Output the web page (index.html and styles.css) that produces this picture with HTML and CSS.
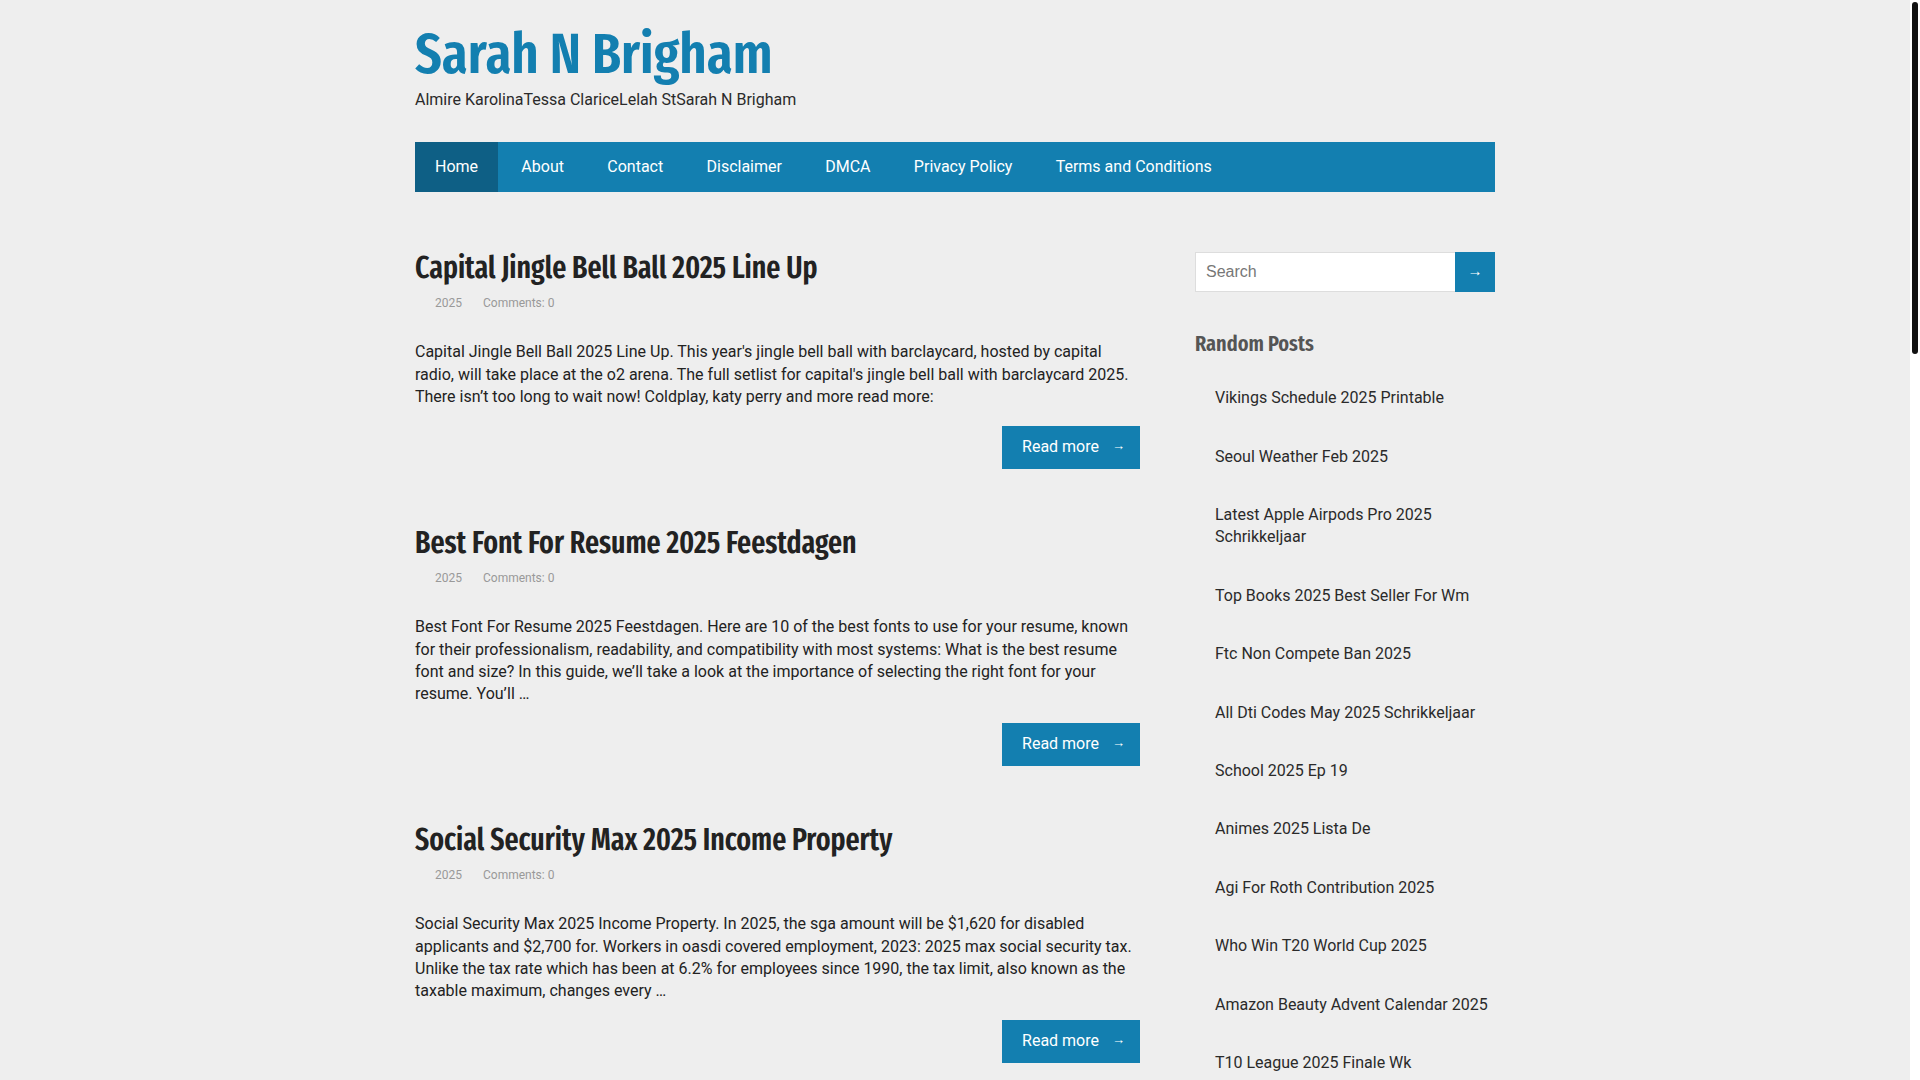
FILE: index.html
```html
<!DOCTYPE html>
<html lang="en">
<head>
<meta charset="utf-8">
<title>Sarah N Brigham</title>
<link rel="stylesheet" href="styles.css">
</head>
<body>
<div class="container">
  <header class="site-header">
    <div class="site-title"><a href="#">Sarah N Brigham</a></div>
    <div class="tagline">Almire KarolinaTessa ClariceLelah StSarah N Brigham</div>
    <nav class="main-nav">
      <ul>
        <li class="current"><a href="#">Home</a></li>
        <li><a href="#">About</a></li>
        <li><a href="#">Contact</a></li>
        <li><a href="#">Disclaimer</a></li>
        <li><a href="#">DMCA</a></li>
        <li><a href="#">Privacy Policy</a></li>
        <li><a href="#">Terms and Conditions</a></li>
      </ul>
    </nav>
  </header>

  <div class="site-main">
    <main class="content">
      <article class="post">
        <h2 class="post-title"><a href="#">Capital Jingle Bell Ball 2025 Line Up</a></h2>
        <div class="post-meta"><span class="date">2025</span><span class="comments">Comments: 0</span></div>
        <p class="excerpt">Capital Jingle Bell Ball 2025 Line Up. This year's jingle bell ball with barclaycard, hosted by capital radio, will take place at the o2 arena. The full setlist for capital's jingle bell ball with barclaycard 2025. There isn’t too long to wait now! Coldplay, katy perry and more read more:</p>
        <div class="more-row"><a class="read-more" href="#">Read more<span class="arrow">→</span></a></div>
      </article>

      <article class="post">
        <h2 class="post-title"><a href="#">Best Font For Resume 2025 Feestdagen</a></h2>
        <div class="post-meta"><span class="date">2025</span><span class="comments">Comments: 0</span></div>
        <p class="excerpt">Best Font For Resume 2025 Feestdagen. Here are 10 of the best fonts to use for your resume, known for their professionalism, readability, and compatibility with most systems: What is the best resume font and size? In this guide, we’ll take a look at the importance of selecting the right font for your resume. You’ll …</p>
        <div class="more-row"><a class="read-more" href="#">Read more<span class="arrow">→</span></a></div>
      </article>

      <article class="post">
        <h2 class="post-title"><a href="#">Social Security Max 2025 Income Property</a></h2>
        <div class="post-meta"><span class="date">2025</span><span class="comments">Comments: 0</span></div>
        <p class="excerpt">Social Security Max 2025 Income Property. In 2025, the sga amount will be $1,620 for disabled applicants and $2,700 for. Workers in oasdi covered employment, 2023: 2025 max social security tax. Unlike the tax rate which has been at 6.2% for employees since 1990, the tax limit, also known as the taxable maximum, changes every …</p>
        <div class="more-row"><a class="read-more" href="#">Read more<span class="arrow">→</span></a></div>
      </article>

      <article class="post">
        <h2 class="post-title"><a href="#">Vikings Schedule 2025 Printable</a></h2>
        <div class="post-meta"><span class="date">2025</span><span class="comments">Comments: 0</span></div>
        <p class="excerpt">Vikings Schedule 2025 Printable. The minnesota vikings have released their full schedule for the upcoming season, including preseason games, home and away matchups and the dates you need to know. Print it out and keep it handy so you never miss a game …</p>
        <div class="more-row"><a class="read-more" href="#">Read more<span class="arrow">→</span></a></div>
      </article>

      <article class="post">
        <h2 class="post-title"><a href="#">Seoul Weather Feb 2025</a></h2>
        <div class="post-meta"><span class="date">2025</span><span class="comments">Comments: 0</span></div>
        <p class="excerpt">Seoul Weather Feb 2025. February in seoul is still cold, with average highs around 5°c and lows below freezing. Expect dry days with occasional snow, so pack warm layers, gloves and a good coat if you are planning to travel during this month …</p>
        <div class="more-row"><a class="read-more" href="#">Read more<span class="arrow">→</span></a></div>
      </article>

      <article class="post">
        <h2 class="post-title"><a href="#">Top Books 2025 Best Seller For Wm</a></h2>
        <div class="post-meta"><span class="date">2025</span><span class="comments">Comments: 0</span></div>
        <p class="excerpt">Top Books 2025 Best Seller For Wm. Discover the most popular titles of the year, from gripping thrillers to heartfelt memoirs. These are the books readers could not put down, ranked by sales and reviews from around the world …</p>
        <div class="more-row"><a class="read-more" href="#">Read more<span class="arrow">→</span></a></div>
      </article>

      <article class="post">
        <h2 class="post-title"><a href="#">Ftc Non Compete Ban 2025</a></h2>
        <div class="post-meta"><span class="date">2025</span><span class="comments">Comments: 0</span></div>
        <p class="excerpt">Ftc Non Compete Ban 2025. The federal trade commission issued a final rule to promote competition by banning noncompetes nationwide, protecting the fundamental freedom of workers to change jobs, increasing innovation and fostering new business formation …</p>
        <div class="more-row"><a class="read-more" href="#">Read more<span class="arrow">→</span></a></div>
      </article>

      <article class="post">
        <h2 class="post-title"><a href="#">School 2025 Ep 19</a></h2>
        <div class="post-meta"><span class="date">2025</span><span class="comments">Comments: 0</span></div>
        <p class="excerpt">School 2025 Ep 19. The students face their biggest challenge yet as exam season approaches, friendships are tested and secrets come to light. Find out what happens next in this dramatic episode of the popular series …</p>
        <div class="more-row"><a class="read-more" href="#">Read more<span class="arrow">→</span></a></div>
      </article>

      <article class="post">
        <h2 class="post-title"><a href="#">Animes 2025 Lista De</a></h2>
        <div class="post-meta"><span class="date">2025</span><span class="comments">Comments: 0</span></div>
        <p class="excerpt">Animes 2025 Lista De. Confira a lista completa dos animes que estreiam nesta temporada, com sinopses, estúdios e datas de lançamento para você não perder nenhuma novidade do ano …</p>
        <div class="more-row"><a class="read-more" href="#">Read more<span class="arrow">→</span></a></div>
      </article>
    </main>

    <aside class="sidebar">
      <form class="search-form" onsubmit="return false">
        <input class="search-field" type="search" placeholder="Search">
        <button class="search-submit" type="submit"><span class="search-arrow">→</span></button>
      </form>

      <section class="widget">
        <h3 class="widget-title">Random Posts</h3>
        <ul class="random-list">
          <li><a href="#">Vikings Schedule 2025 Printable</a></li>
          <li><a href="#">Seoul Weather Feb 2025</a></li>
          <li><a href="#">Latest Apple Airpods Pro 2025 Schrikkeljaar</a></li>
          <li><a href="#">Top Books 2025 Best Seller For Wm</a></li>
          <li><a href="#">Ftc Non Compete Ban 2025</a></li>
          <li><a href="#">All Dti Codes May 2025 Schrikkeljaar</a></li>
          <li><a href="#">School 2025 Ep 19</a></li>
          <li><a href="#">Animes 2025 Lista De</a></li>
          <li><a href="#">Agi For Roth Contribution 2025</a></li>
          <li><a href="#">Who Win T20 World Cup 2025</a></li>
          <li><a href="#">Amazon Beauty Advent Calendar 2025</a></li>
          <li><a href="#">T10 League 2025 Finale Wk</a></li>
          <li><a href="#">Capital Jingle Bell Ball 2025 Line Up</a></li>
          <li><a href="#">Best Font For Resume 2025 Feestdagen</a></li>
          <li><a href="#">Social Security Max 2025 Income Property</a></li>
        </ul>
      </section>
    </aside>
  </div>

  <footer class="site-footer">Copyright © 2025 Sarah N Brigham</footer>
</div>
<div class="fake-scrollbar"><div class="fake-thumb"></div></div>
</body>
</html>
```
FILE: styles.css
```css
html {
  background: #eeeeee;
}
body {
  margin: 0;
  padding-right: 10px;
  background: #eeeeee;
  color: #222222;
  font-family: Roboto, "Liberation Sans", Arial, sans-serif;
  font-size: 16px;
  line-height: 1.4;
}
a {
  text-decoration: none;
  color: inherit;
}
.container {
  width: 1080px;
  margin: 0 auto;
}

/* fake scrollbar drawn over the right edge */
.fake-scrollbar {
  position: fixed;
  top: 0;
  right: 0;
  width: 10px;
  height: 100vh;
  background: #ffffff;
}
.fake-thumb {
  position: absolute;
  top: 2px;
  left: 2px;
  width: 6px;
  height: 352px;
  border-radius: 3px;
  background: #111111;
}

/* header */
.site-header {
  padding-top: 20px;
}
.site-title {
  font-family: "Fira Sans Extra Condensed", "Roboto Condensed", sans-serif;
  font-weight: 600;
  font-size: 57px;
  line-height: 1.2;
  color: #137fb0;
}
.tagline {
  font-size: 16px;
  line-height: 24px;
  color: #2a2a2a;
}
.main-nav {
  margin-top: 30px;
  height: 50px;
  background: #137fb0;
}
.main-nav ul {
  display: flex;
  gap: 3.3px;
  margin: 0;
  padding: 0;
  list-style: none;
}
.main-nav a {
  display: block;
  padding: 0 20px;
  line-height: 50px;
  font-size: 16px;
  color: #ffffff;
}
.main-nav .current a {
  background: #0e5f85;
}

/* layout */
.site-main {
  display: flex;
  gap: 55px;
  padding-top: 60px;
}
.content {
  width: 725px;
  flex: none;
}
.sidebar {
  width: 300px;
  flex: none;
}

/* posts */
.post {
  margin-bottom: 58.5px;
}
.post-title {
  margin: 0;
  font-family: "Fira Sans Extra Condensed", "Roboto Condensed", sans-serif;
  font-weight: 600;
  font-size: 30.2px;
  line-height: 32px;
  color: #222222;
}
.post-meta {
  margin-top: 10px;
  font-size: 12px;
  line-height: 18px;
  color: #999999;
}
.post-meta .date {
  padding-left: 20px;
}
.post-meta .comments {
  margin-left: 21px;
}
.excerpt {
  margin: 29px 0 0;
  line-height: 22.4px;
  color: #222222;
}
.more-row {
  display: flex;
  justify-content: flex-end;
  margin-top: 17px;
}
.read-more {
  display: flex;
  align-items: center;
  height: 43px;
  padding: 0 18px 0 20px;
  background: #137fb0;
  color: #ffffff;
  font-size: 16px;
  line-height: 20px;
}
.read-more .arrow {
  display: block;
  width: 10px;
  margin-left: 13px;
  padding-bottom: 2px;
  font-family: "Liberation Sans", Arial, sans-serif;
  font-size: 13px;
  line-height: 16px;
  text-align: center;
}

/* sidebar */
.search-form {
  display: flex;
  height: 40px;
}
.search-field {
  flex: 1;
  min-width: 0;
  box-sizing: border-box;
  height: 40px;
  margin: 0;
  padding: 0 10px;
  border: 1px solid #dddddd;
  border-right: none;
  background: #ffffff;
  font-family: "Liberation Sans", Arial, sans-serif;
  font-size: 16px;
  color: #333333;
  outline: none;
}
.search-field::placeholder {
  color: #777777;
}
.search-submit {
  display: flex;
  align-items: center;
  justify-content: center;
  width: 40px;
  height: 40px;
  margin: 0;
  padding: 0;
  border: none;
  background: #137fb0;
  color: #ffffff;
  cursor: pointer;
}
.search-arrow {
  display: block;
  padding-bottom: 3px;
  font-family: "Liberation Sans", Arial, sans-serif;
  font-size: 15px;
  line-height: 16px;
}
.widget-title {
  margin: 38.4px 0 12px;
  font-family: "Fira Sans Extra Condensed", "Roboto Condensed", sans-serif;
  font-weight: 600;
  font-size: 22px;
  line-height: 1.2;
  color: #555555;
}
.random-list {
  margin: 0;
  padding: 0;
  list-style: none;
}
.random-list li {
  padding: 18px 0 18px 20px;
  line-height: 22.4px;
  color: #2a2a2a;
}

/* footer */
.site-footer {
  padding: 30px 0 40px;
  font-size: 13px;
  color: #777777;
}
```
